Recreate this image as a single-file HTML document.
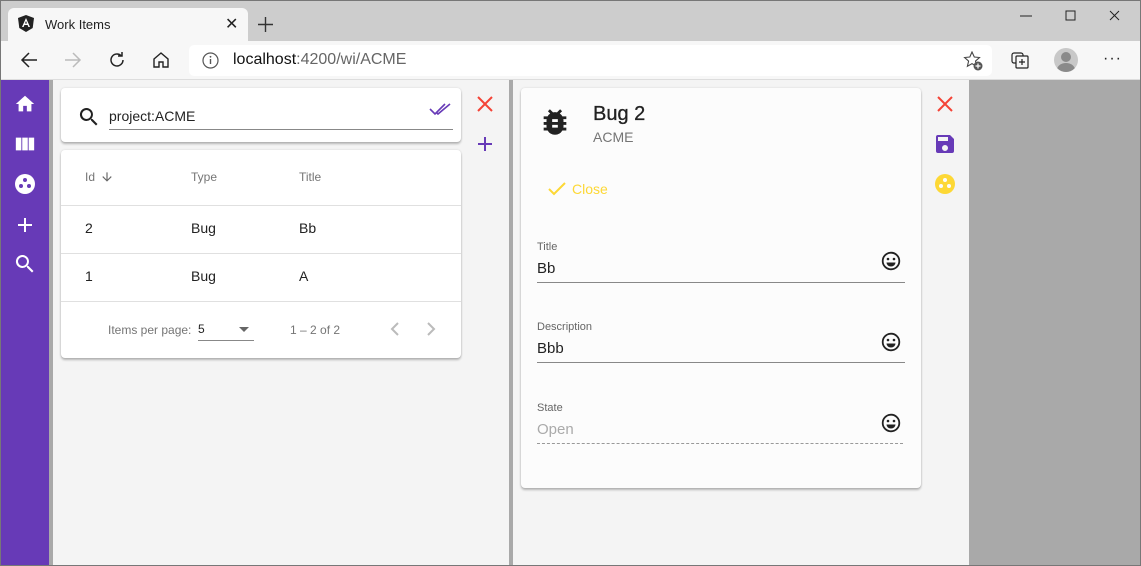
<!DOCTYPE html>
<html><head><style>
*{box-sizing:border-box;margin:0;padding:0}
body{width:1141px;height:566px;overflow:hidden;font-family:"Liberation Sans",sans-serif;background:#a9a9a9;position:relative}
.a{position:absolute}
svg{display:block}
.card{background:#fff;border-radius:4px;box-shadow:0 2px 2px rgba(0,0,0,.25),0 0 2px rgba(0,0,0,.12)}
.lbl{font-size:11px;color:#666}
.val{font-size:15px;color:#222}
</style></head><body>
<div class="a" style="left:0;top:0;width:1141px;height:566px;border:1px solid #777;z-index:9;pointer-events:none"></div>
<div class="a" style="left:0;top:0;width:1141px;height:41px;background:#cdcdcd"></div>
<div class="a" style="left:8px;top:8px;width:240px;height:33px;background:#f7f7f7;border-radius:6px 6px 0 0"></div>
<svg class="a" style="left:18px;top:15px" width="16" height="17" viewBox="0 0 16 17"><path d="M8 0L0 3l1.3 10L8 17l6.7-4L16 3z" fill="#222"/><path d="M8 3L4 12h1.6l.8-2h3.2l.8 2H12zM7 8.5L8 6l1 2.5z" fill="#fff"/></svg>
<div class="a" style="left:45px;top:17px;font-size:13px;color:#222">Work Items</div>
<div class="a" style="left:225px;top:14px;font-size:16px;color:#222">✕</div>
<svg class="a" style="left:258px;top:17px" width="15" height="15"><path d="M7.5 0v15M0 7.5h15" stroke="#333" stroke-width="1.4"/></svg>
<svg class="a" style="left:1018px;top:9px" width="110" height="14"><path d="M2 7h12" stroke="#222"/><rect x="48" y="2" width="9" height="9" fill="none" stroke="#222"/><path d="M92 2l9 9M101 2l-9 9" stroke="#222"/></svg>
<div class="a" style="left:0;top:41px;width:1141px;height:39px;background:#f7f7f7;border-bottom:1px solid #ddd"></div>
<svg class="a" style="left:20px;top:51px" width="18" height="18"><path d="M17 9H2M9 2L2 9l7 7" fill="none" stroke="#222" stroke-width="1.5"/></svg>
<svg class="a" style="left:64px;top:51px" width="18" height="18"><path d="M1 9h15M9 2l7 7-7 7" fill="none" stroke="#bbb" stroke-width="1.5"/></svg>
<svg class="a" style="left:108px;top:51px" width="18" height="18"><path d="M15 9a6 6 0 1 1-2-4.5M14 1v4h-4" fill="none" stroke="#222" stroke-width="1.5"/></svg>
<svg class="a" style="left:152px;top:51px" width="18" height="18"><path d="M2 8l7-6 7 6v8h-5v-5H7v5H2z" fill="none" stroke="#222" stroke-width="1.4"/></svg>
<div class="a" style="left:189px;top:45px;width:803px;height:31px;background:#fff;border-radius:5px"></div>
<svg class="a" style="left:202px;top:52px" width="17" height="17"><circle cx="8.5" cy="8.5" r="7.5" fill="none" stroke="#555" stroke-width="1.2"/><path d="M8.5 7v5" stroke="#555" stroke-width="1.4"/><circle cx="8.5" cy="4.8" r=".9" fill="#555"/></svg>
<div class="a" style="left:233px;top:51px;font-size:16px;color:#111">localhost<span style="color:#666">:4200/wi/ACME</span></div>
<svg class="a" style="left:963px;top:51px" width="20" height="20"><path d="M9 1l2.3 5 5.2.5-4 3.6 1.2 5.2L9 12.6 4.4 15.3l1.2-5.2-4-3.6 5.2-.5z" fill="none" stroke="#444" stroke-width="1.1"/><circle cx="15" cy="15" r="4.5" fill="#555"/><path d="M15 12.5v5M12.5 15h5" stroke="#fff" stroke-width="1.2"/></svg>
<svg class="a" style="left:1011px;top:51px" width="20" height="18"><rect x="1" y="2" width="11" height="10" rx="2" fill="none" stroke="#222" stroke-width="1.2"/><rect x="5" y="5" width="12" height="12" rx="1" fill="#f7f7f7" stroke="#222" stroke-width="1.2"/><path d="M11 8v6M8 11h6" stroke="#222" stroke-width="1.2"/></svg>
<div class="a" style="left:1054px;top:48px;width:24px;height:24px;border-radius:50%;background:#c8c8c8;overflow:hidden"><div class="a" style="left:7px;top:4px;width:10px;height:10px;border-radius:50%;background:#8a8a8a"></div><div class="a" style="left:3px;top:15px;width:18px;height:14px;border-radius:50%;background:#8a8a8a"></div></div>
<div class="a" style="left:1103px;top:50px;font-size:16px;color:#222;letter-spacing:1px">···</div>
<div class="a" style="left:1px;top:80px;width:48px;height:486px;background:#673ab7"></div>
<svg class="a" style="left:14px;top:93px" width="22" height="22" viewBox="0 0 24 24"><path d="M10 20v-6h4v6h5v-8h3L12 3 2 12h3v8z" fill="#fff"/></svg>
<svg class="a" style="left:14px;top:133px" width="22" height="22" viewBox="0 0 24 24"><path d="M2 5h6v14H2zM9 5h6v14H9zM16 5h6v14h-6z" fill="#fff"/></svg>
<svg class="a" style="left:13px;top:172px" width="24" height="24" viewBox="0 0 24 24"><circle cx="12" cy="12" r="10" fill="#fff"/><circle cx="12" cy="8" r="2" fill="#673ab7"/><circle cx="8" cy="14" r="2" fill="#673ab7"/><circle cx="16" cy="14" r="2" fill="#673ab7"/></svg>
<svg class="a" style="left:13px;top:213px" width="24" height="24" viewBox="0 0 24 24"><path d="M19 13h-6v6h-2v-6H5v-2h6V5h2v6h6z" fill="#fff"/></svg>
<svg class="a" style="left:13px;top:252px" width="24" height="24" viewBox="0 0 24 24"><path d="M15.5 14h-.8l-.3-.3A6.5 6.5 0 1 0 9.5 16a6.5 6.5 0 0 0 4.2-1.6l.3.3v.8l5 5 1.5-1.5zm-6 0a4.5 4.5 0 1 1 0-9 4.5 4.5 0 0 1 0 9z" fill="#fff"/></svg>
<div class="a" style="left:49px;top:80px;width:4px;height:486px;background:#a9a9a9"></div>
<div class="a" style="left:53px;top:80px;width:456px;height:486px;background:#f4f4f4"></div>
<div class="a" style="left:509px;top:80px;width:4px;height:486px;background:#a9a9a9"></div>
<div class="a" style="left:513px;top:80px;width:456px;height:486px;background:#f4f4f4"></div>
<div class="a card" style="left:61px;top:88px;width:400px;height:54px"></div>
<svg class="a" style="left:77px;top:105px" width="24" height="24" viewBox="0 0 24 24"><path d="M15.5 14h-.8l-.3-.3A6.5 6.5 0 1 0 9.5 16a6.5 6.5 0 0 0 4.2-1.6l.3.3v.8l5 5 1.5-1.5zm-6 0a4.5 4.5 0 1 1 0-9 4.5 4.5 0 0 1 0 9z" fill="#222"/></svg>
<div class="a" style="left:109px;top:108px;font-size:14px;color:#222">project:ACME</div>
<div class="a" style="left:109px;top:129px;width:344px;height:1px;background:#888"></div>
<svg class="a" style="left:429px;top:102px" width="22" height="14" viewBox="0 0 22 14"><path d="M1 7l5 5L16 2M8 11l1 1L21 2" fill="none" stroke="#673ab7" stroke-width="1.6"/></svg>
<svg class="a" style="left:477px;top:96px" width="16" height="16"><path d="M1 1l14 14M15 1L1 15" stroke="#f44336" stroke-width="2"/></svg>
<svg class="a" style="left:477px;top:136px" width="16" height="16"><path d="M8 1v14M1 8h14" stroke="#673ab7" stroke-width="2"/></svg>
<div class="a card" style="left:61px;top:150px;width:400px;height:208px"></div>
<div class="a" style="left:85px;top:170px;font-size:12px;color:#757575">Id</div>
<svg class="a" style="left:100px;top:170px" width="14" height="14" viewBox="0 0 24 24"><path d="M20 12l-1.4-1.4-5.6 5.6V4h-2v12.2l-5.6-5.6L4 12l8 8z" fill="#666"/></svg>
<div class="a" style="left:191px;top:170px;font-size:12px;color:#757575">Type</div>
<div class="a" style="left:299px;top:170px;font-size:12px;color:#757575">Title</div>
<div class="a" style="left:61px;top:205px;width:400px;height:1px;background:#e0e0e0"></div>
<div class="a val" style="left:85px;top:220px;font-size:14px">2</div>
<div class="a val" style="left:191px;top:220px;font-size:14px">Bug</div>
<div class="a val" style="left:299px;top:220px;font-size:14px">Bb</div>
<div class="a" style="left:61px;top:253px;width:400px;height:1px;background:#e0e0e0"></div>
<div class="a val" style="left:85px;top:268px;font-size:14px">1</div>
<div class="a val" style="left:191px;top:268px;font-size:14px">Bug</div>
<div class="a val" style="left:299px;top:268px;font-size:14px">A</div>
<div class="a" style="left:61px;top:301px;width:400px;height:1px;background:#e0e0e0"></div>
<div class="a" style="left:108px;top:323px;font-size:12px;color:#757575">Items per page:</div>
<div class="a" style="left:198px;top:322px;font-size:12px;color:#222">5</div>
<svg class="a" style="left:239px;top:327px" width="10" height="5"><path d="M0 0h10L5 5z" fill="#666"/></svg>
<div class="a" style="left:198px;top:340px;width:56px;height:1px;background:#888"></div>
<div class="a" style="left:290px;top:323px;font-size:12px;color:#757575">1 – 2 of 2</div>
<svg class="a" style="left:386px;top:321px" width="60" height="16"><path d="M12 2L6 8l6 6M42 2l6 6-6 6" fill="none" stroke="#bbb" stroke-width="2"/></svg>
<div class="a card" style="left:521px;top:88px;width:400px;height:400px;background:#fcfcfc"></div>
<svg class="a" style="left:538px;top:105px" width="34" height="34" viewBox="0 0 24 24"><path d="M20 8h-2.8a6 6 0 0 0-1.8-2l1.6-1.6L15.6 3l-2.2 2.2a6 6 0 0 0-2.8 0L8.4 3 7 4.4 8.6 6a6 6 0 0 0-1.8 2H4v2h2.1a6 6 0 0 0-.1 1v1H4v2h2v1a6 6 0 0 0 .1 1H4v2h2.8A6 6 0 0 0 17.2 18H20v-2h-2.1a6 6 0 0 0 .1-1v-1h2v-2h-2v-1a6 6 0 0 0-.1-1H20zm-6 8h-4v-2h4zm0-4h-4v-2h4z" fill="#222"/></svg>
<div class="a" style="left:593px;top:103px;font-size:20px;color:#222;-webkit-text-stroke:0.3px #222">Bug 2</div>
<div class="a" style="left:593px;top:129px;font-size:14px;color:#757575">ACME</div>
<svg class="a" style="left:547px;top:181px" width="20" height="16"><path d="M2 8l5 5L18 2" fill="none" stroke="#fdd835" stroke-width="2"/></svg>
<div class="a" style="left:572px;top:181px;font-size:14px;color:#fdd835">Close</div>
<div class="a lbl" style="left:537px;top:241px">Title</div>
<div class="a val" style="left:537px;top:260px">Bb</div>
<div class="a" style="left:537px;top:282px;width:368px;height:1px;background:#888"></div>
<div class="a lbl" style="left:537px;top:321px">Description</div>
<div class="a val" style="left:537px;top:340px">Bbb</div>
<div class="a" style="left:537px;top:362px;width:368px;height:1px;background:#888"></div>
<div class="a lbl" style="left:537px;top:402px">State</div>
<div class="a val" style="left:537px;top:421px;color:#aaa">Open</div>
<div class="a" style="left:537px;top:443px;width:366px;border-top:1px dashed #999"></div>
<svg class="a" style="left:881px;top:251px" width="20" height="20" viewBox="0 0 20 20"><circle cx="10" cy="10" r="8.3" fill="none" stroke="#222" stroke-width="1.8"/><circle cx="7" cy="8" r="1.3" fill="#222"/><circle cx="13" cy="8" r="1.3" fill="#222"/><path d="M5.5 11.5h9a4.5 4 0 0 1-9 0z" fill="#222"/></svg>
<svg class="a" style="left:881px;top:332px" width="20" height="20" viewBox="0 0 20 20"><circle cx="10" cy="10" r="8.3" fill="none" stroke="#222" stroke-width="1.8"/><circle cx="7" cy="8" r="1.3" fill="#222"/><circle cx="13" cy="8" r="1.3" fill="#222"/><path d="M5.5 11.5h9a4.5 4 0 0 1-9 0z" fill="#222"/></svg>
<svg class="a" style="left:881px;top:413px" width="20" height="20" viewBox="0 0 20 20"><circle cx="10" cy="10" r="8.3" fill="none" stroke="#222" stroke-width="1.8"/><circle cx="7" cy="8" r="1.3" fill="#222"/><circle cx="13" cy="8" r="1.3" fill="#222"/><path d="M5.5 11.5h9a4.5 4 0 0 1-9 0z" fill="#222"/></svg>
<svg class="a" style="left:937px;top:96px" width="16" height="16"><path d="M1 1l14 14M15 1L1 15" stroke="#f44336" stroke-width="2"/></svg>
<svg class="a" style="left:933px;top:132px" width="24" height="24" viewBox="0 0 24 24"><path d="M17 3H5a2 2 0 0 0-2 2v14a2 2 0 0 0 2 2h14a2 2 0 0 0 2-2V7zm-5 16a3 3 0 1 1 0-6 3 3 0 0 1 0 6zm3-10H5V5h10z" fill="#673ab7"/></svg>
<svg class="a" style="left:933px;top:172px" width="24" height="24" viewBox="0 0 24 24"><circle cx="12" cy="12" r="10" fill="#fdd835"/><circle cx="12" cy="8" r="2" fill="#fcfcfc"/><circle cx="8" cy="14" r="2" fill="#fcfcfc"/><circle cx="16" cy="14" r="2" fill="#fcfcfc"/></svg>
</body></html>
